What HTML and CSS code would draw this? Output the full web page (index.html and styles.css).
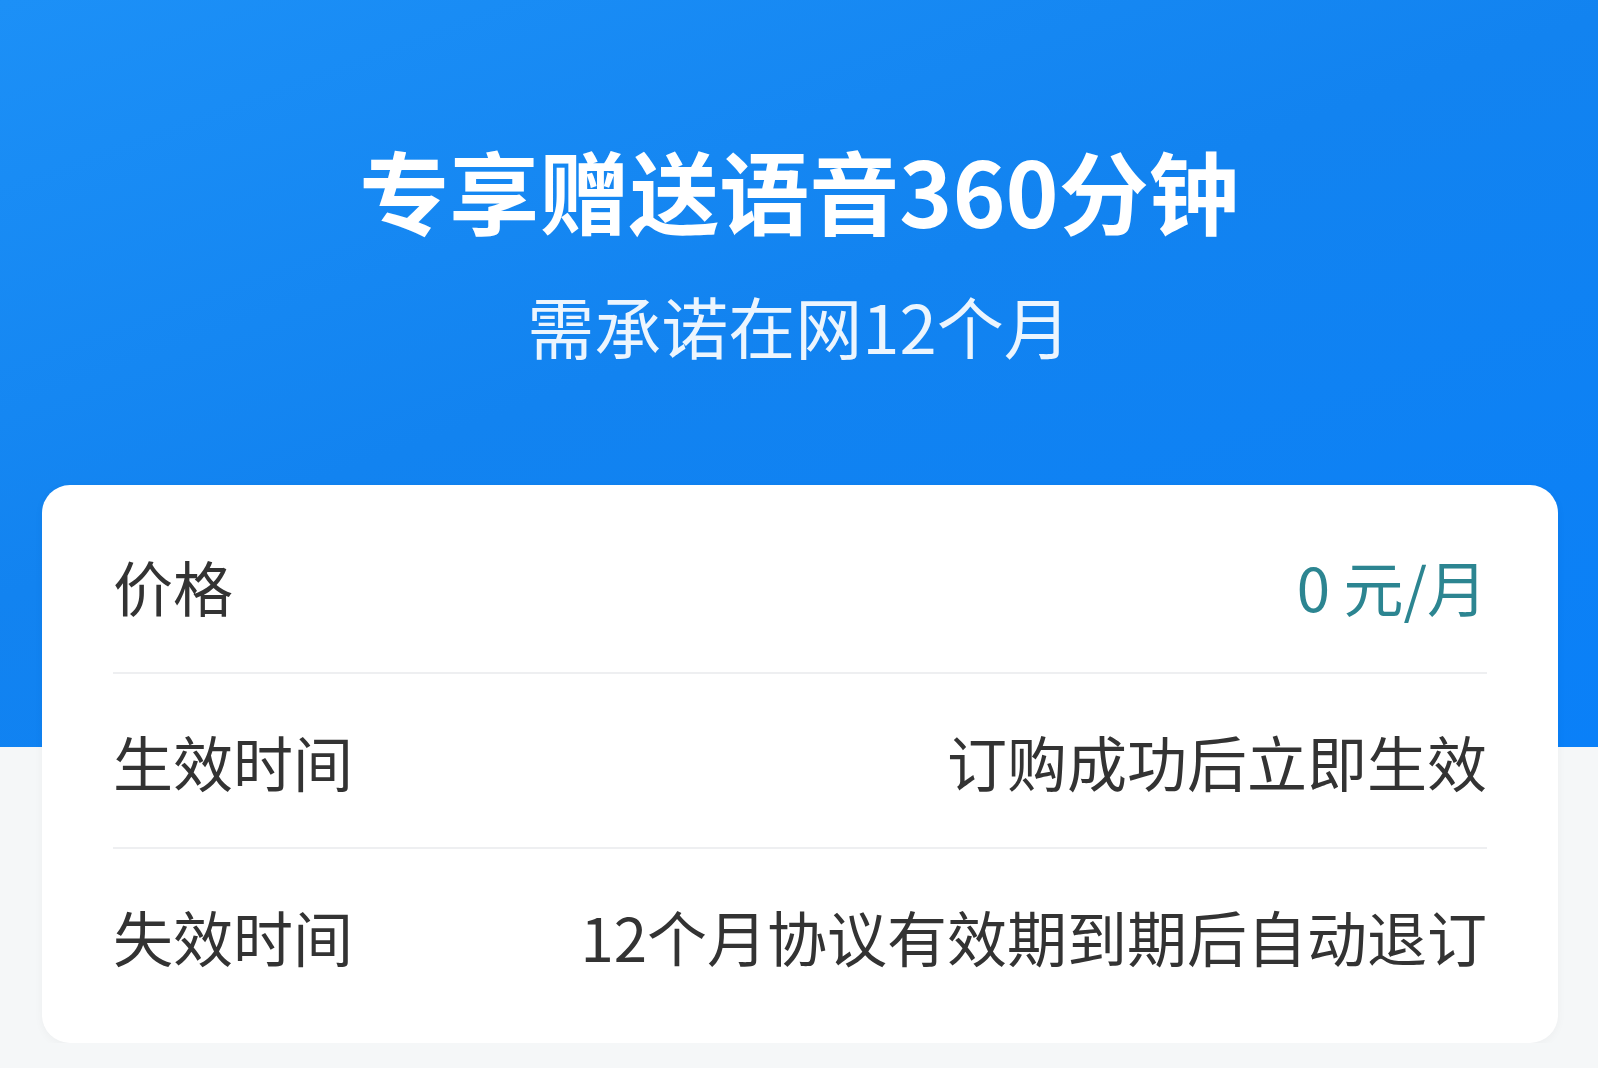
FILE: index.html
```html
<!DOCTYPE html>
<html lang="zh-CN">
<head>
  <meta charset="UTF-8" />
  <title>专享赠送语音360分钟</title>
  <link rel="stylesheet" href="styles.css">
</head>
<body>
  <div class="banner">
    <h1>专享赠送语音360分钟</h1>
    <p class="sub">需承诺在网12个月</p>
  </div>

  <div class="card">
    <div class="row">
      <span class="label">价格</span>
      <span class="value price">0 元/月</span>
    </div>
    <div class="row">
      <span class="label">生效时间</span>
      <span class="value">订购成功后立即生效</span>
    </div>
    <div class="row">
      <span class="label">失效时间</span>
      <span class="value">12个月协议有效期到期后自动退订</span>
    </div>
  </div>
</body>
</html>
```

FILE: styles.css
```css
body {
  margin: 0;
  font-family: "Noto Sans CJK SC", "Noto Sans", sans-serif;
  background-color: #f5f7f8;
}
.banner {
  height: 747px;
  box-sizing: border-box;
  padding-top: 135px;
  text-align: center;
  color: #fff;
  background: linear-gradient(160deg, #1c90f7 0%, #1283f0 45%, #0a80f8 100%);
}
.banner h1 {
  margin: 0;
  font-size: 90px;
  line-height: 108px;
  font-weight: bold;
}
.banner .sub {
  margin: 42px 0 0;
  font-size: 67px;
  line-height: 80px;
  color: rgba(255,255,255,0.92);
}
.card {
  margin: -262px 40px 0 42px;
  padding: 14px 71px 21px;
  background: #fff;
  border-radius: 28px;
  box-shadow: 0 2px 10px rgba(0,0,0,0.04);
}
.row {
  display: flex;
  justify-content: space-between;
  align-items: center;
  height: 173px;
  font-size: 60px;
  color: #333;
  border-bottom: 2px solid #eeeff1;
}
.row:last-child {
  border-bottom: none;
}
.value.price {
  color: #2c8591;
}
```
